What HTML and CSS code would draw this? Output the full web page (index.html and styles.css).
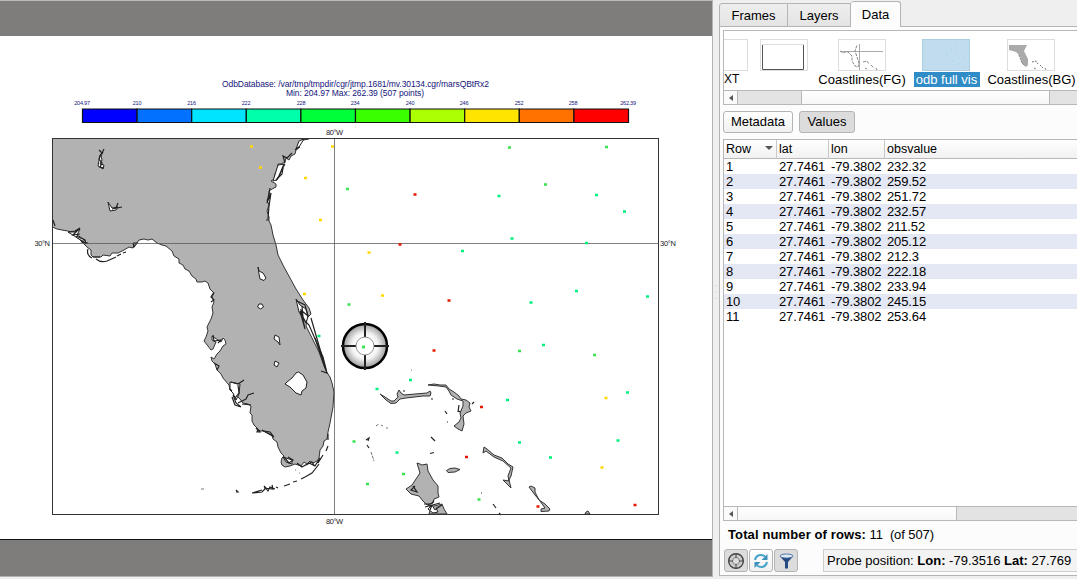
FILE: index.html
```html
<!DOCTYPE html>
<html lang="en">
<head>
<meta charset="utf-8">
<title>OdbDatabase</title>
<link rel="stylesheet" href="styles.css">
</head>
<body>
<main class="window">
<section class="viewer">
<div class="margin-top"></div>
<svg class="plot" viewBox="0 36 712 503">
<defs>
<radialGradient id="lens"><stop offset=".4" stop-color="#fff"/><stop offset=".6" stop-color="#f2f2f2"/><stop offset="1" stop-color="#999"/></radialGradient>
</defs>
<g class="title">
<text x="222" y="87" textLength="267">OdbDatabase: /var/tmp/tmpdir/cgr/jtmp.1681/mv.30134.cgr/marsQBtRx2</text>
<text x="286" y="96" textLength="138">Min: 204.97 Max: 262.39 (507 points)</text>
</g>
<g class="ticks">
<text x="82" y="105">204.97</text><text x="137" y="105">210</text><text x="191.500" y="105">216</text><text x="246" y="105">222</text><text x="301" y="105">228</text><text x="355" y="105">234</text><text x="410" y="105">240</text><text x="464" y="105">246</text><text x="519" y="105">252</text><text x="573" y="105">258</text><text x="628" y="105">262.39</text>
</g>
<g class="legend">
<path fill="#00f" d="M82.500 109h54.600v13.500h-54.600z"/><path fill="#0072ff" d="M137.100 109h54.600v13.500h-54.600z"/><path fill="#00e4ff" d="M191.700 109h54.600v13.500h-54.600z"/><path fill="#00ffaa" d="M246.300 109h54.600v13.500h-54.600z"/><path fill="#00ff38" d="M300.900 109h54.600v13.500h-54.600z"/><path fill="#39ff00" d="M355.500 109h54.600v13.500h-54.600z"/><path fill="#abff00" d="M410.100 109h54.600v13.500h-54.600z"/><path fill="#ffe400" d="M464.700 109h54.600v13.500h-54.600z"/><path fill="#ff7200" d="M519.300 109h54.600v13.500h-54.600z"/><path fill="#f00" d="M573.900 109h54.600v13.500h-54.600z"/>
</g>
<g class="land">
<path d="M52.500 138.500H303L300 142L298 146L300 147L296 150L295 154L291 156L289 160L286 158L285 162L281 164L278 164L277 170L275 174L274 179L271 181L276 184L276 187L272 189L269 191L270 196L267 200L269 205L267 211L269 217L269 221L271 225L273 235L276 245L278 255L284 267L290 278L296 289L303 300L309 308L311 314L307 318L306 326L313 340L319 352L326 371L330 377L332 383L334 392L333 407L330 423L328 432L327 439L324 441L323 446L320 450L319 458L317 461L313 463L310 461L307 464L304 462L301 466L295 464L290 466L285 467L282 465L281 462L282 458L284 456L281 453L278 447L277 442L273 439L272 435L268 433L263 431L260 431L257 428L254 425L252 421L252 415L250 413L251 406L248 404L243 403L240 399L237 396L234 394L230 390L229 385L223 378L221 374L217 370L215 364L212 361L211 357L214 359L217 354L220 351L223 346L226 344L225 340L223 338L221 342L218 340L212 336L212 340L216 342L213 349L211 350L208 346L204 341L206 337L208 331L207 327L211 319L213 313L212 307L214 302L212 297L214 293L210 289L208 283L205 281L202 282L197 282L196 279L192 276L189 271L185 269L183 265L179 263L179 259L174 256L172 251L166 246L162 245L157 243L152 239L148 240L144 239L139 240L137 243L134 244L133 248L129 247L124 250L118 253L112 253L110 256L103 255L101 257L93 257L91 255L91 250L87 247L83 243L79 239L76 237L72 233L68 231L62 230L57 229L52.500 227z"/>
<path d="M380 394L385 397L391 401L394 401L398 397L397 394L399 390L401 393L404 395L415 394L427 393L430 391L431 393L430 396L423 396L406 398L400 399L396 403L391 403.500L386 400zM428 385L434 384L440 385L446 385L449 389L454 392L459 396L461 399L466 400L470 403L469 407L471 411L466 413L463 416L464 424L462 431L458 429L454 426L459 422L461 418L460 413L463 406L463 401L457 399L451 395L449 391L446 387L439 386zM484 447L487 449L494 455L502 458L508 464L513 467L511 476L509 480L511 488L508 485L503 480L509 481L508 476L511 468L503 461L494 457L486 451L483 453zM417 463L420 464L422 465L427 464L428 471L433 480L438 486L438 493L439 497L434 499L433 503L427 505L423 501L419 496L411 494L406 489L412 485L416 479L420 473zM446.500 470.500L450 468.500L455 468L460 469.500L455 472L448 472.500zM429 514L431 507L428 505L434 506L442 504L444 509L447 514zM529 487L531 486L535 488L535 492L539 500L545 504L550 509L549 511L541 511.500L541 509L545 508L540 501L535 495zM585 514L586 512L588 511L590 514z"/>
</g>
<g class="water">
<path d="M258 267L259 271L263 273L266 278L264 280.500L260 279L259 274zM259 304L262 304L263.500 307L260.500 309L257.500 307zM275 335L279 337L280 345L278 342L274 339zM275 361L279 363L277 367L274 365zM298.500 372L303 375L307 382L306 388L302 391L301 395L296 393L290 387L285 384L287 382L292 378L296 373zM103 152L101 156L102 160L100 164L104 165L103 169L98 166L100 155zM108 202L112 208L118 207L116 210L110 211zM296 299L300 305L306 309L308 316L306 323L299 312zM230 382L240 384L239 394L236 400L233 393L230 390z"/>
<path d="M68 232L75 232L80 229L77 235L85 240L86 243L79 239zM278 165L285 164L277 180L273 181zM299 141L304 139L299 147L296 149zM283 457L292 460L292 464L286 462zM428 509L432 505L435 510L442 505L436 508L438 512L433 513z"/>
</g>
<g class="coast">
<path d="M99 150L102 153L104 149M101 154L99 159L102 163L100 167L104 168M116 208L118 203M112 209L122 207M53 220L55 226M68 232L75 231L80 228L73 235L80 234M76 236L85 240L82 242L88 243L84 244M88 249Q86 255 92 258M93 257L100 257M96 259Q101 263 107 261L116 257M117 256L121 254M123 253L126 252M133 243L137 243L134 247L133 243M299 147L295 150M303 140L309 139M292 153L287 158L283 156L285 163M284 164L279 176L276 180L282 174L283 168M270 188L267 203L271 193L269 206L268 219M266 220L269 220M297 301L305 305L308 316L301 310L305 329L300 311L305 321L309 325L323 357L327 373L321 371M302 306L303 317M214 292L211 297L214 300L211 302M213 335L214 341L221 340L218 343M214 363L219 366L217 370M231 382L238 384L244 380M230 389L232 391M238 385L239 393L235 398M233 395L236 403L241 407M232 397L235 405L241 407M238 403L246 399L248 395L254 393M251 405L242 404M256 428L260 432L257 432L258 429M262 430L269 434L274 437L270 432L264 431M284 457L289 463L293 460L288 457M297 463L302 467L309 463L315 466L320 458L318 463L323 455M326 451L328 446M316 468L312 473L305 477L301 479M297 481L293 482M290 484L284 486M278 488L276 487M275 489L270 487L268 491L264 486L266 488L262 492L253 493M272 485L273 489L264 488M252 493L262 490M236 490L238 492L236 492M306 465L312 462L314 465M319 464L316 468M328 434V440M366 440L369 438L368 441M367 445L369 448"/>
<path d="M403 391h2M431 399h2M431 437L435 441M430 453.500L434 452.500M452 399h2M459 405L458 412M458 411l3 1M472 404L474 402M445 411L447 414M447 422h1M481 493h1M413 486L417 492L411 490L415 486M430 510L432 505M424 504L431 504L434 501M425 507L440 503M493 504L496 508M499 513L501 515M311 318L326 370M315 338L325 368"/>
<path class="thin" d="M371 452L374 461M376 426L379 424M381 425L383 426M386 428L388 428M411 370h1M295 470h1M299 473h1M201 489h3"/>
</g>
<path class="grid" d="M334.500 138.500V514.500M52.500 243.500H658.500"/>
<rect class="frame" x="52.500" y="138.500" width="606" height="376"/>
<g class="deg"><text x="326" y="135" textLength="17">80°W</text><text x="326" y="524" textLength="17">80°W</text><text x="34.500" y="246" textLength="15.500">30°N</text><text x="660" y="246" textLength="16">30°N</text></g>
<g class="dots">
<path stroke="#ffd800" d="M250 146.500h3M259 167.500h3M331 146.500h3M304 178h3M319 220h3M367.500 252.500h3M381 295.500h3M604.500 398h3M600.500 467.500h3M303 294h3"/>
<path stroke="#00f080" d="M497.500 196h3M595 195h3M623 211.500h3M510.500 238.500h3M585 243h3M461 251h3M575 291h3M646 296.500h3M529.500 302.500h3M317.500 336h3M409 380h3M375.500 389h3M626 392.500h3M518 442.500h3M616.500 440.500h3M549 457.500h3M542 345h3M506 400h3M395.500 452.500h3"/>
<path stroke="#38e450" d="M508 147.500h3M605 147h3M544 184.500h3M346 189h3M347.500 304.500h3M518 351h3M593 355h3M352.500 441.500h3M402 474h3M366 484h3M477.500 499.500h3"/>
<path stroke="#e81800" d="M413.500 194.500h3M398.500 244.500h3M447.500 300.500h3M432.500 350.500h3M480 407h3M465 457h3M536.500 506.500h3M633.500 505h3"/>
</g>
<g class="probe">
<circle cx="365" cy="346" r="22" fill="url(#lens)" stroke="#000" stroke-width="2.500"/>
<path d="M365 322V337M365 355V370M341 346H356M374 346H389"/>
<circle cx="365" cy="346" r="9" fill="#fff" stroke="#777" stroke-width=".8"/>
<path class="hit" d="M362 347h3"/>
</g>
</svg>
<div class="margin-bottom"></div>
</section>
<div class="splitter"></div>
<section class="sidebar">
<nav class="tabs"><span class="tab frames">Frames</span><span class="tab layers">Layers</span><span class="tab data">Data</span></nav>
<div class="page">
<div class="list">
<div class="thumbs">
<div class="item xt"><svg viewBox="0 0 48 32"><rect x=".5" y=".5" width="47" height="31"/></svg><span>XT</span></div>
<div class="item blank"><svg viewBox="0 0 48 32"><rect x=".5" y=".5" width="47" height="31"/><path d="M2.500 6V30.500H43.500V6" stroke="#555"/><path d="M2 5.500h42" stroke="#ddd"/></svg><span>&nbsp;</span></div>
<div class="item fg"><svg viewBox="0 0 48 32"><rect x=".5" y=".5" width="47" height="31"/><path d="M21.500 5V31M2 12.500H45" stroke="#aaa"/><path d="M2 12l3 2 2-1 3 0 4 4v5l3 5 3 1 1-4-2-6-2-6 2-6M25 23l4-1 2 3M27 29l2 1M33 26l3 3M38 29l1 2" stroke="#888" stroke-dasharray="3 1"/></svg><span>Coastlines(FG)</span></div>
<div class="item selected"><svg viewBox="0 0 48 32"><rect x=".5" y=".5" width="47" height="31"/><path d="M23 6h1M29 10h1M34 6h1M40 8h1M25 15h1M34 15h1M42 18h1M23 23h1M31 22h1M37 25h1M42 28h1" stroke="#a6d2d0"/></svg><span>odb full vis</span></div>
<div class="item bg"><svg viewBox="0 0 48 32"><rect x=".5" y=".5" width="47" height="31"/><path d="M2 6H20L17 12L21 20V26L19 28L15 24L13 17L9 13L2 11z"/><path d="M12 16l3 8 3 3M25 23l4-1 2 3M27 29l2 1M33 26l3 3M38 29l1 2" stroke="#777" stroke-dasharray="2 1"/></svg><span>Coastlines(BG)</span></div>
</div>
<div class="scroll top-scroll"><i class="arrow"></i><i class="gap"></i><b></b></div>
</div>
<div class="buttons"><button class="meta">Metadata</button><button class="values">Values</button></div>
<div class="table">
<div class="row head"><span>Row<i class="sort"></i></span><span>lat</span><span>lon</span><span>obsvalue</span></div>
<div class="row"><span>1</span><span>27.7461</span><span>-79.3802</span><span>232.32</span></div>
<div class="row"><span>2</span><span>27.7461</span><span>-79.3802</span><span>259.52</span></div>
<div class="row"><span>3</span><span>27.7461</span><span>-79.3802</span><span>251.72</span></div>
<div class="row"><span>4</span><span>27.7461</span><span>-79.3802</span><span>232.57</span></div>
<div class="row"><span>5</span><span>27.7461</span><span>-79.3802</span><span>211.52</span></div>
<div class="row"><span>6</span><span>27.7461</span><span>-79.3802</span><span>205.12</span></div>
<div class="row"><span>7</span><span>27.7461</span><span>-79.3802</span><span>212.3</span></div>
<div class="row"><span>8</span><span>27.7461</span><span>-79.3802</span><span>222.18</span></div>
<div class="row"><span>9</span><span>27.7461</span><span>-79.3802</span><span>233.94</span></div>
<div class="row"><span>10</span><span>27.7461</span><span>-79.3802</span><span>245.15</span></div>
<div class="row"><span>11</span><span>27.7461</span><span>-79.3802</span><span>253.64</span></div>
<div class="filler"></div>
<div class="scroll bottom-scroll"><i class="arrow"></i><b></b></div>
</div>
<p class="total"><b>Total number of rows:</b> 11 &nbsp;(of 507)</p>
<footer>
<button class="tool on"><svg viewBox="0 0 18 18"><circle cx="9" cy="9" r="7.300" fill="#ccc" stroke="#444" stroke-width="1.400"/><circle cx="9" cy="9" r="3.500" fill="#ddd" stroke="#888"/><path d="M9 1v5M9 12v5M1 9h5M12 9h5" stroke="#444"/></svg></button>
<button class="tool"><svg viewBox="0 0 18 18"><path d="M3 8C4 3 9 1.500 13 4.500M15 10C14 15 9 16.500 5 13.500" fill="none" stroke="#4aa3c9" stroke-width="2"/><path d="M15.500 2V8H9.500zM2.500 16V10H8.500z" fill="#3d91bb"/></svg></button>
<button class="tool on"><svg viewBox="0 0 18 18"><path d="M3 4.500L8 10V16.500H11V10L16 4.500z" fill="#234a82"/><ellipse cx="9.500" cy="4" rx="6.500" ry="2" fill="#dce8f5" stroke="#5577a5"/></svg></button>
<div class="position"><span>Probe position: <b>Lon:</b> -79.3516 <b>Lat:</b> 27.769</span></div>
</footer>
</div>
</section>
</main>
</body>
</html>
```
FILE: styles.css
```css
* { box-sizing: border-box; }
body { margin: 0; background: #efefef; font: 13px/15px "Liberation Sans", Arial, sans-serif; color: #000; overflow: hidden; }
.window { display: flex; width: 1077px; height: 579px; }
.viewer { width: 713px; height: 577px; border-top: 1px solid #bbb; border-right: 1px solid #b2b2b2; border-bottom: 1px solid #b2b2b2; display: flex; flex-direction: column; flex-shrink: 0; }
.margin-top { height: 35px; background: #7f7d7b; }
.plot { display: block; box-sizing: content-box; width: 712px; height: 503px; background: #fff; border-bottom: 1px solid #111; flex-shrink: 0; }
.margin-bottom { flex: 1; background: #7f7d7b; }
.title { font-size: 8.500px; fill: #14147a; }
.ticks { font-size: 5.500px; letter-spacing: -.2px; fill: #14147a; text-anchor: middle; }
.deg { font-size: 7.500px; fill: #222; }
.legend path { stroke: #111; stroke-width: 1.200; }
.land path { fill: #b2b2b2; stroke: #333; stroke-width: 1; stroke-linejoin: round; }
.water path { fill: #fff; stroke: #222; }
.coast path { fill: none; stroke: #222; stroke-width: 1.200; }
.coast .thin { stroke: #777; stroke-width: 1; stroke-dasharray: 3 1; }
.grid { stroke: #555; stroke-opacity: .75; fill: none; }
.frame { fill: none; stroke: #333; }
.dots path { stroke-width: 2.500; }
.probe path { stroke: #222; stroke-width: 2; }
.probe .hit { stroke: #38e450; stroke-width: 3; }
.splitter { width: 6px; flex-shrink: 0; background: radial-gradient(circle, #ccc 0 .5px, transparent .8px) center 284px / 4px 4px no-repeat, radial-gradient(circle, #ccc 0 .5px, transparent .8px) center 290px / 4px 4px no-repeat, radial-gradient(circle, #ccc 0 .5px, transparent .8px) center 296px / 4px 4px no-repeat; }
.sidebar { width: 358px; height: 576px; display: flex; flex-direction: column; flex-shrink: 0; }
.tabs { display: flex; height: 27px; align-items: flex-end; position: relative; z-index: 1; }
.tab { height: 24px; border: 1px solid #b4b4b4; background: linear-gradient(#eee, #e4e4e4); text-align: center; line-height: 23px; }
.frames { width: 69px; border-radius: 3px 0 0; }
.layers { width: 63px; border-left: 0; }
.data { width: 50px; height: 26px; background: #fcfcfc; border-bottom: 0; border-left: 0; border-radius: 3px 3px 0 0; line-height: 26px; }
.page { flex: 1; margin-top: -1px; border: 1px solid #b4b4b4; border-right: 0; background: #fcfcfc; padding: 3px 0 0 3px; }
.list { height: 75px; border: 1px solid #b8b8b8; border-right: 0; background: #fff; display: flex; flex-direction: column; overflow: hidden; }
.thumbs { height: 60px; display: flex; overflow: hidden; padding-top: 8px; }
.item { flex-shrink: 0; display: flex; flex-direction: column; align-items: center; }
.item svg { width: 48px; height: 32px; margin-bottom: 1px; margin-left: -1px; }
.item rect { fill: #fff; stroke: #ddd; }
.item path { fill: none; }
.item.bg path:first-of-type { fill: #aaa; }
.item span { line-height: 15px; white-space: nowrap; }
.xt { width: 24px; align-items: flex-end; font-size: 12px; }
.xt span { width: 24px; }
.blank { width: 73px; }
.fg { width: 82px; }
.selected { width: 87px; }
.selected rect { fill: #c0dcee; stroke: #a9cfe0; }
.selected span { width: 66px; text-align: center; background: #308cc6; color: #fff; }
.bg { width: 83px; }
.scroll { height: 14px; background: #e3e3e3; border-top: 1px solid #b8b8b8; display: flex; flex-shrink: 0; }
.scroll b { background: linear-gradient(#fff, #f7f7f7); border: solid #b8b8b8; border-width: 0 1px; }
.arrow { width: 13px; background: #fafafa; display: flex; align-items: center; justify-content: center; }
.arrow::before { content: ""; border: 3.500px solid transparent; border-right: 4px solid #555; border-left: 0; }
.gap { width: 64px; border-left: 1px solid #b8b8b8; }
.top-scroll b { width: 249px; }
.bottom-scroll b { width: 220px; }
.buttons { display: flex; gap: 6px; padding: 6px 0; height: 34px; }
button { font: 13px/20px "Liberation Sans", Arial, sans-serif; padding: 0; border: 1px solid #b4b4b4; border-radius: 3px; background: linear-gradient(#fff, #f0f0f0); color: #000; height: 22px; }
.meta { width: 70px; }
.values { width: 56px; }
.values, .on { background: #dcdcdc; }
.table { height: 382px; border: 1px solid #b8b8b8; border-right: 0; background: #fff; display: flex; flex-direction: column; }
.row { display: grid; grid-template-columns: 53px 52px 56px 1fr; height: 15px; flex-shrink: 0; line-height: 15px; font-size: 13px; letter-spacing: -.12px; }
.row span { padding-left: 2px; white-space: nowrap; }
.row:nth-child(odd) { background: #e4e7f4; }
.head.row { height: 19px; line-height: 19px; background: linear-gradient(#fff, #f1f1f1); border-bottom: 1px solid #b8b8b8; font-size: 12.500px; letter-spacing: 0; }
.head span { border-right: 1px solid #c8c8c8; }
.head span:last-child { border: 0; }
.sort { float: right; margin: 6px 3px; border: 4px solid transparent; border-top-color: #555; border-bottom: 0; }
.filler { flex: 1; }
.total { margin: 0; height: 28px; padding: 6px 0 0 5px; line-height: 15px; letter-spacing: -.1px; }
.total b { letter-spacing: .12px; }
footer { display: flex; gap: 1px; padding-left: 1px; }
.tool { width: 24px; height: 23px; display: flex; align-items: center; justify-content: center; }
.tool svg { width: 18px; height: 18px; flex-shrink: 0; }
.position { margin-left: 24px; flex: 1; height: 23px; border: 1px solid #d2cdc6; border-right: 0; background: #f3f3f3; padding-left: 3px; line-height: 21px; white-space: nowrap; }
```
